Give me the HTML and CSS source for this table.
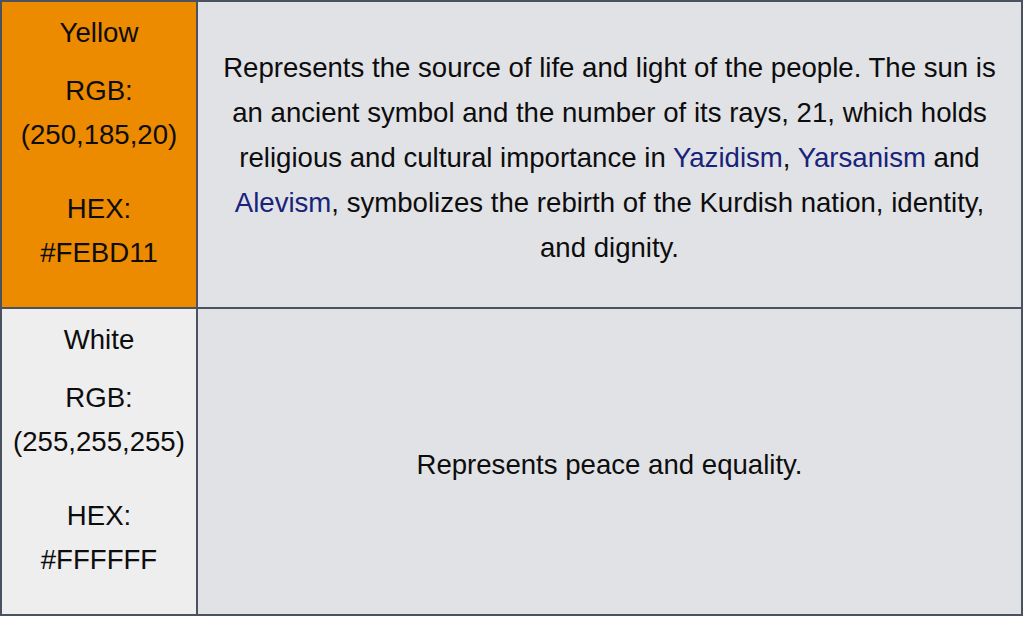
FILE: index.html
```html
<!DOCTYPE html>
<html>
<head>
<meta charset="utf-8">
<link rel="stylesheet" href="styles.css">
</head>
<body>
<table class="colors">
  <tr class="row">
    <td class="swatch swatch-yellow">
      <div class="line">Yellow</div>
      <div class="group">
        <div class="line">RGB:</div>
        <div class="line">(250,185,20)</div>
      </div>
      <div class="group group-hex">
        <div class="line">HEX:</div>
        <div class="line">#FEBD11</div>
      </div>
    </td>
    <td class="meaning">Represents the source of life and light of the people. The sun is<br>an ancient symbol and the number of its rays, 21, which holds<br>religious and cultural importance in <a class="link">Yazidism</a>, <a class="link">Yarsanism</a> and<br><a class="link">Alevism</a>, symbolizes the rebirth of the Kurdish nation, identity,<br>and dignity.</td>
  </tr>
  <tr class="row">
    <td class="swatch swatch-white">
      <div class="line">White</div>
      <div class="group">
        <div class="line">RGB:</div>
        <div class="line">(255,255,255)</div>
      </div>
      <div class="group group-hex">
        <div class="line">HEX:</div>
        <div class="line">#FFFFFF</div>
      </div>
    </td>
    <td class="meaning">Represents peace and equality.</td>
  </tr>
</table>
</body>
</html>
```
FILE: styles.css
```css
html, body {
  margin: 0;
  padding: 0;
  background: #ffffff;
}
body {
  font-family: "Liberation Sans", Arial, sans-serif;
  color: #0d0d0d;
}
.colors {
  border-collapse: collapse;
  width: 1023px;
  margin-top: 0;
  table-layout: fixed;
}
.row {
  height: 307px;
}
.colors td {
  border: 2px solid #4a5260;
  padding: 0;
}
.swatch {
  width: 194px;
  vertical-align: top;
  text-align: center;
  font-size: 27.6px;
  padding-top: 9px !important;
}
.swatch-yellow {
  background: #ec8a00;
}
.swatch-white {
  background: #eeeeef;
}
.line {
  line-height: 44px;
}
.group {
  margin-top: 14px;
}
.group-hex {
  margin-top: 30px;
}
.meaning {
  background: #e1e2e6;
  text-align: center;
  vertical-align: middle;
  font-size: 27.6px;
  line-height: 45px;
  padding-top: 6px !important;
}
.link {
  color: #19237a;
  text-decoration: none;
}
```
